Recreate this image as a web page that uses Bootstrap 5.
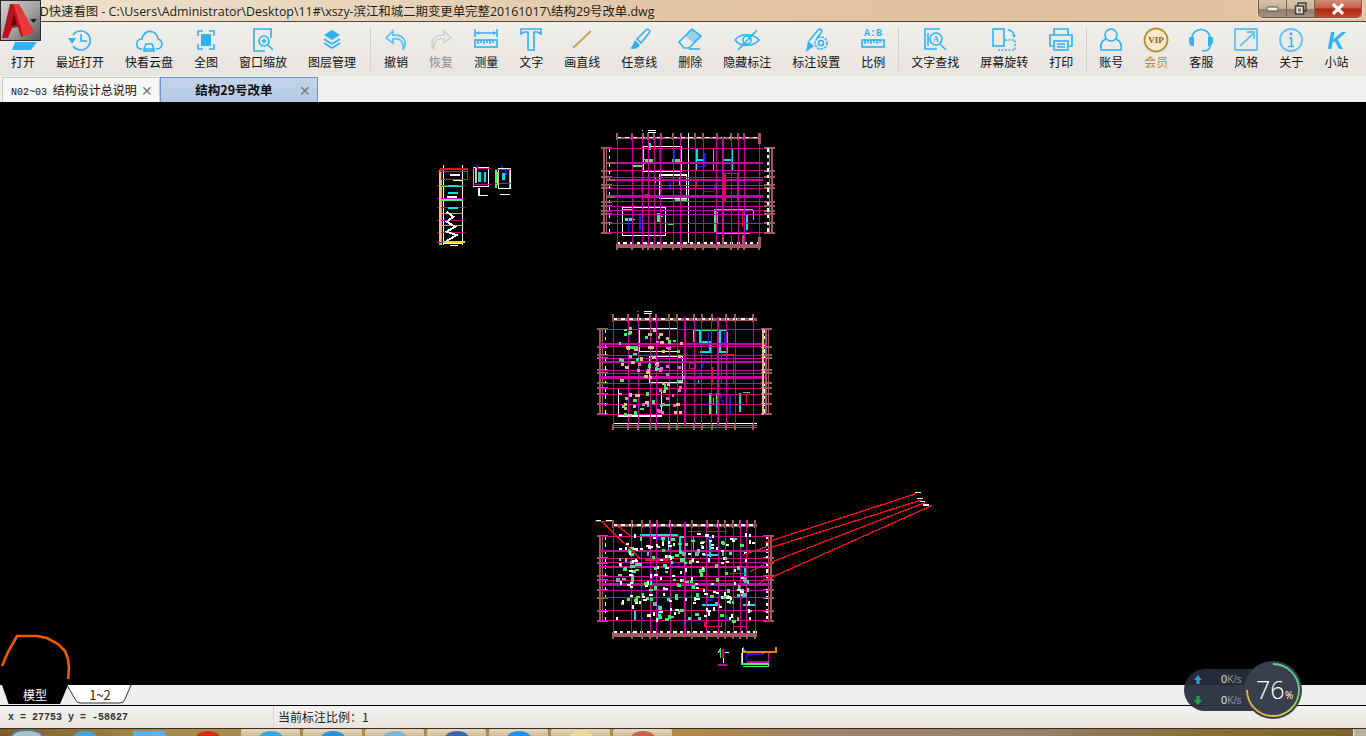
<!DOCTYPE html>
<html lang="zh-CN">
<head>
<meta charset="UTF-8" />
<meta name="viewport" content="width=device-width, initial-scale=1.0" />
<title>CAD快速看图</title>
<link href="https://cdn.jsdelivr.net/npm/bootstrap@5.3.2/dist/css/bootstrap.min.css" rel="stylesheet" />
<style>
  html, body { height: 100%; overflow: hidden; background: #000; }
  body { font-family: "Liberation Sans", "Noto Sans CJK SC", sans-serif; font-size: 12px; color: #111; }
  .app-shell { width: 1366px; height: 736px; position: relative; overflow: hidden; }

  .title-strip { height: 22px; background: linear-gradient(90deg, #efe3d0 0, #e6d0b4 35%, #e2c5a4 50%, #dfbf9e 75%, #e2c4a2 100%); border-bottom: 1px solid #54483e; padding-left: 24px; }
  .title-text { font-family: "Open Sans", "Noto Sans CJK SC", sans-serif; font-size: 12.4px; line-height: 21px; padding-top: 1px; color: #1c1c1c; white-space: nowrap; }
  .win-btns { height: 18px; border: 1px solid #6b5a50; border-top: 0; border-radius: 0 0 5px 5px; overflow: hidden; margin-right: 4px; box-shadow: 0 0 0 1px rgba(255,255,255,.45); }
  .win-btn { width: 28px; background: linear-gradient(#d8c4ad, #c9b199 50%, #927f6e 55%, #a5917f); border-right: 1px solid #75665a; }
  .win-close { width: 46px; border-right: 0; background: linear-gradient(#cf8f7a, #c25a42 48%, #a92812 52%, #c8452a); }

  .tool-strip { height: 54px; background: linear-gradient(#f0efeb, #e8e4e0); padding-left: 11px; }
  .tool-group { gap: 21px; }
  .tool-group + .tool-group { border-left: 1px solid #d2cfca; margin: 5px 0 5px 14px; padding-left: 13px; }
  .tool-group + .tool-group.tool-tight { margin-left: 13px; padding-left: 12px; }
  .tool-item { width: min-content; white-space: nowrap; line-height: 15px; font-size: 12px; font-family: "Noto Sans CJK SC", sans-serif; margin-top: 4px; }
  .tool-group + .tool-group .tool-item { margin-top: -1px; }
  .tool-item svg { display: block; width: 30px; height: 28px; margin: 0 -6px; }
  .tool-off { color: #8d8d8d; }
  .tool-vip { color: #bd8a2e; }
  .ic { fill: none; stroke: #2db2f2; stroke-width: 1.6; }
  .ic-pale { fill: none; stroke: #63c3f3; stroke-width: 1.8; }
  .ifill { fill: #2db2f2; }

  .tab-strip { height: 26px; background: #f0f0f0; padding: 1px 0 0 2px; }
  .doc-tab { width: 158px; height: 25px; padding: 0 6px 0 8px; background: #f7f7f7; border: 1px solid #c9c9c9; border-bottom: 0; font-family: "Noto Sans CJK SC", sans-serif; white-space: nowrap; }
  .doc-tab-on { background: linear-gradient(#c2d4ea, #b5cae4); border: 1px solid #6d92c6; border-bottom: 0; font-weight: 700; font-size: 12.5px; }
  .doc-close { color: #777; font-size: 14px; line-height: 1; font-weight: 400; }
  .mono-part { font-family: "Liberation Mono", monospace; font-size: 10px; margin-right: 3px; }

  .cad-area { height: 583px; background: #000; }
  .cad-area svg { display: block; }

  .sheet-strip { height: 20px; background: #efefef; padding-left: 2px; }
  .sheet-tab { width: 66px; height: 19px; text-align: center; line-height: 19px; font-family: "Noto Sans CJK SC", sans-serif; clip-path: polygon(0 0, 100% 0, 88% 100%, 10% 100%); }
  .sheet-on { background: #000; color: #fff; }
  .sheet-shape { width: 66px; height: 19px; margin-left: -1px; }
  .sheet-label { line-height: 19px; font-size: 13px; color: #3a2410; font-family: "Noto Sans CJK SC", sans-serif; }

  .status-strip { height: 23px; border-top: 1px solid #000; background: linear-gradient(#f3f2f0, #e8e4e0); }
  .status-xy { width: 274px; padding-left: 8px; font-family: "Liberation Mono", monospace; font-size: 10px; font-weight: 700; color: #333; line-height: 23px; border-right: 1px solid #d6d3cf; }
  .status-scale { padding-left: 4px; font-family: "Noto Sans CJK SC", sans-serif; line-height: 22px; color: #222; }

  .task-strip { height: 8px; border-top: 1px solid #3e2e1c; background: linear-gradient(90deg, #7c5c2c 0, #a88a50 12%, #a58a55 40%, #b08a48 50%, #a0806a 60%, #97806a 75%, #8a6c3a 88%, #7d6230 100%); }
  .task-orb { width: 32px; margin-left: 11px; height: 14px; border-radius: 50%; background: #a8c0cf; border: 2px solid #5a7a90; }
  .task-icon { width: 30px; }
  .task-gap-a { margin-left: 27px; }
  .task-gap-b { margin-left: 33px; }
  .task-gap-c { margin-left: 30px; }
  .task-gap-d { margin-left: 18px; }
  .task-btn { width: 59px; margin-right: 3px; background: linear-gradient(#e6d8bf, #d0bb9a); border-radius: 2px 2px 0 0; }
  .task-dot { width: 24px; height: 14px; border-radius: 50%; margin: 2px auto 0; }
  .task-flat { width: 32px; height: 8px; border-radius: 0; background: #5cb2e8; }
  .dot-a { background: #3aa7e0; }
  .dot-b { background: #d82a10; }
  .dot-c { background: #2a8fdc; }
  .dot-d { background: #7ab6d8; }
  .dot-e { background: #3a68a8; }
  .dot-f { background: #1d8ff0; }
  .dot-g { background: #ecd99a; }
  .dot-h { background: #c8604a; }
  .task-corner { width: 13px; background: #b9b19f; border-left: 1px solid #e6dfcf; }

  .app-logo { position: absolute; left: 0; top: 0; width: 41px; height: 41px; background: linear-gradient(135deg, #d0d0d0, #a0a0a0 55%, #565656); border: 1px solid #2b2b2b; }
  .app-logo svg { display: block; }

  .net-widget { position: absolute; left: 1184px; top: 660px; width: 120px; height: 60px; }
  .net-pill { position: absolute; left: 0; top: 9px; width: 90px; height: 42px; border-radius: 21px; background: rgba(40,45,60,.95); color: #8b93a5; font-size: 10px; }
  .net-row { height: 21px; line-height: 21px; padding-left: 10px; }
  .net-row svg { vertical-align: -1px; }
  .net-num { margin-left: 19px; color: #dfe6ee; font-size: 11px; }
  .net-ring { position: absolute; left: 60px; top: 1px; width: 58px; height: 58px; }
</style>
</head>
<body>
<div class="app-shell d-flex flex-column">

  <div class="title-strip d-flex justify-content-between">
    <div class="title-text">CAD快速看图 - C:\Users\Administrator\Desktop\11#\xszy-滨江和城二期变更单完整20161017\结构29号改单.dwg</div>
    <div class="win-btns d-flex">
      <div class="win-btn d-flex align-items-center justify-content-center">
        <svg width="14" height="8"><rect x="1" y="2" width="11" height="4" rx="1" fill="#eee" stroke="#554"/></svg>
      </div>
      <div class="win-btn d-flex align-items-center justify-content-center">
        <svg width="14" height="14"><rect x="4" y="1" width="8" height="8" fill="none" stroke="#443" stroke-width="1.5"/><rect x="1.5" y="4" width="8" height="8" fill="#ddd" stroke="#443" stroke-width="1.5"/><rect x="4" y="6.5" width="3" height="3" fill="#776"/></svg>
      </div>
      <div class="win-btn win-close d-flex align-items-center justify-content-center">
        <svg width="14" height="12"><path d="M2 1 12 11M12 1 2 11" stroke="#fff" stroke-width="3.2"/></svg>
      </div>
    </div>
  </div>

  <div class="tool-strip d-flex">
    <div class="tool-group d-flex">
      <div class="tool-item d-flex flex-column align-items-center"><svg viewBox="0 0 30 28"><path class="ifill" d="M7 16H29L23 24H4Z"/></svg>打开</div>
      <div class="tool-item d-flex flex-column align-items-center"><svg viewBox="0 0 30 28"><path class="ic" stroke-width="2" d="M8 9A9.5 9.5 0 1 1 8 20"/><path class="ifill" d="M3 12H11L7 18Z"/><path class="ic" d="M16 8V15H22"/></svg>最近打开</div>
      <div class="tool-item d-flex flex-column align-items-center"><svg viewBox="0 0 30 28"><path class="ic" d="M8 23C3 23 2 19 3 17C3 14 6 13 8 13C9 7 14 4 19 6C22 7 24 11 24 13C28 14 29 18 27 21C26 23 24 23 22 23"/><path class="ic" d="M10 23 12 18H18L20 23ZM10 23V25H20V23"/></svg>快看云盘</div>
      <div class="tool-item d-flex flex-column align-items-center"><svg viewBox="0 0 30 28"><path class="ic" d="M7 10V5H12M18 5H23V10M23 18V23H18M12 23H7V18"/><rect class="ifill" x="10" y="8" width="10" height="12"/></svg>全图</div>
      <div class="tool-item d-flex flex-column align-items-center"><svg viewBox="0 0 30 28"><path class="ic" d="M20 3H6V25H17"/><path class="ic" d="M20 3H23V12"/><circle class="ic" cx="16" cy="15" r="5"/><path class="ic" d="M20 19 25 24M13.500 15H18.500M16 12.500V17.500"/></svg>窗口缩放</div>
      <div class="tool-item d-flex flex-column align-items-center"><svg viewBox="0 0 30 28"><path class="ifill" d="M15 4 23 9 15 14 7 9Z"/><path class="ic" d="M7 13 15 18 23 13M7 17 15 22 23 17"/></svg>图层管理</div>
    </div>
    <div class="tool-group d-flex">
      <div class="tool-item d-flex flex-column align-items-center"><svg viewBox="0 0 30 28"><path class="ic-pale" d="M12 5 5 12 12 17V13C18 12 23 14 22 24C26 17 25 9 12 9Z"/></svg>撤销</div>
      <div class="tool-item tool-off d-flex flex-column align-items-center"><svg viewBox="0 0 30 28"><path fill="none" stroke="#d0d0d0" stroke-width="1.6" d="M18 5 25 12 18 17V13C12 12 7 14 8 24C4 17 5 9 18 9Z"/></svg>恢复</div>
      <div class="tool-item d-flex flex-column align-items-center"><svg viewBox="0 0 30 28"><path class="ic" d="M4 3V11M26 3V11M5 7H25"/><path class="ifill" d="M5 7 8 5V9ZM25 7 22 5V9Z"/><rect class="ic" x="4" y="14" width="22" height="7"/><path class="ic" d="M7 14V18M10 14V17M13 14V18M16 14V17M19 14V18M22 14V17"/></svg>测量</div>
      <div class="tool-item d-flex flex-column align-items-center"><svg viewBox="0 0 30 28"><path class="ic" d="M5 8V3H25V8L22 6H18V24H12V6H8Z"/></svg>文字</div>
      <div class="tool-item d-flex flex-column align-items-center"><svg viewBox="0 0 30 28"><path fill="none" stroke="#c3a25b" stroke-width="2" d="M6 22 24 5"/></svg>画直线</div>
      <div class="tool-item d-flex flex-column align-items-center"><svg viewBox="0 0 30 28"><path class="ic" d="M13 13 22 4C24 2 27 5 25 7L17 17Z"/><path class="ifill" d="M11 14 16 19C14 23 9 24 6 22C9 21 9 17 11 14Z"/></svg>任意线</div>
      <div class="tool-item d-flex flex-column align-items-center"><svg viewBox="0 0 30 28"><path class="ic" d="M4 16 17 3 26 10 14 22H9Z"/><path class="ifill" opacity=".45" d="M10 10 17 3 26 10 19 17Z"/><path class="ic" d="M14 23H25"/></svg>删除</div>
      <div class="tool-item d-flex flex-column align-items-center"><svg viewBox="0 0 30 28"><path class="ic" d="M3 14C8 7 21 7 27 14C21 21 8 21 3 14Z"/><circle class="ic" cx="15" cy="14" r="4"/><path class="ic" d="M25 4 6 24"/></svg>隐藏标注</div>
      <div class="tool-item d-flex flex-column align-items-center"><svg viewBox="0 0 30 28"><path class="ic" d="M8 15 17 4C19 2 22 4 20 7L16 12"/><path class="ifill" d="M7 15 13 20 5 26Z"/><circle class="ic" stroke-dasharray="2.500 1" cx="20" cy="17" r="6"/><circle class="ic" cx="20" cy="17" r="2.500"/></svg>标注设置</div>
      <div class="tool-item d-flex flex-column align-items-center"><svg viewBox="0 0 30 28"><text x="15" y="10" text-anchor="middle" class="ifill" font-family="Liberation Mono" font-weight="700" font-size="10">A:B</text><rect class="ic" x="4" y="14" width="22" height="7"/><path class="ic" d="M7 14V18M10 14V17M13 14V18M16 14V17M19 14V18M22 14V17"/></svg>比例</div>
    </div>
    <div class="tool-group tool-tight d-flex">
      <div class="tool-item d-flex flex-column align-items-center"><svg viewBox="0 0 30 28"><path class="ic" d="M20 3H5V23H17"/><path class="ic" d="M8 7V20"/><circle class="ic" cx="16" cy="13" r="6"/><text x="16" y="16" text-anchor="middle" class="ifill" font-size="8" font-weight="700" font-family="Liberation Serif">A</text><path class="ic" d="M20 18 26 24"/></svg>文字查找</div>
      <div class="tool-item d-flex flex-column align-items-center"><svg viewBox="0 0 30 28"><rect class="ic" x="4" y="3" width="11" height="17"/><path class="ic" stroke-dasharray="2 1.500" d="M9 24H26V14H15"/><path class="ic" d="M19 4C22 4 24 6 25 9"/><path class="ifill" d="M23 9H27L25 12Z"/></svg>屏幕旋转</div>
      <div class="tool-item d-flex flex-column align-items-center"><svg viewBox="0 0 30 28"><path class="ic" d="M8 9V3H22V9"/><path class="ic" d="M8 20H4V9H26V20H22"/><rect class="ic" x="8" y="15" width="14" height="9"/><path class="ic" d="M11 18H19M11 21H19"/></svg>打印</div>
    </div>
    <div class="tool-group tool-tight d-flex">
      <div class="tool-item d-flex flex-column align-items-center"><svg viewBox="0 0 30 28"><circle class="ic" cx="15" cy="9" r="6"/><path class="ic" d="M10 13C5 15 4 19 5 24H25C26 19 25 15 20 13"/></svg>账号</div>
      <div class="tool-item tool-vip d-flex flex-column align-items-center"><svg viewBox="0 0 30 28"><circle cx="15" cy="14" r="11.500" fill="#f6e9c8" stroke="#b58a3c" stroke-width="1.800"/><text x="15" y="17" text-anchor="middle" font-family="Liberation Serif" font-weight="700" font-size="9" fill="#8a5a14">VIP</text></svg>会员</div>
      <div class="tool-item d-flex flex-column align-items-center"><svg viewBox="0 0 30 28"><path class="ic" d="M6 14C5 0 25 0 24 14"/><path class="ifill" d="M4 11H8V20H6C3 20 2 12 4 11ZM22 11H26C28 12 27 20 24 20H22Z"/><path class="ic" d="M24 20C24 23 21 25 16 25"/></svg>客服</div>
      <div class="tool-item d-flex flex-column align-items-center"><svg viewBox="0 0 30 28"><path class="ic-pale" d="M14 3H26V24H4V9"/><path class="ic-pale" d="M4 9V3H14M9 20 23 7M16 6H23V13"/></svg>风格</div>
      <div class="tool-item d-flex flex-column align-items-center"><svg viewBox="0 0 30 28"><circle class="ic-pale" cx="15" cy="14" r="11"/><circle class="ifill" cx="15" cy="8" r="1.400"/><path class="ic" d="M13 12H15.500V20M12 20.500H18"/></svg>关于</div>
      <div class="tool-item d-flex flex-column align-items-center"><svg viewBox="0 0 30 28"><text x="15" y="23" text-anchor="middle" class="ifill" font-family="Liberation Sans" font-style="italic" font-weight="700" font-size="24">K</text></svg>小站</div>
    </div>
  </div>

  <div class="tab-strip d-flex">
    <div class="doc-tab d-flex align-items-center justify-content-between"><span><span class="mono-part">N02~03</span> 结构设计总说明</span><span class="doc-close">✕</span></div>
    <div class="doc-tab doc-tab-on d-flex align-items-center justify-content-between"><span class="flex-grow-1 text-center">结构29号改单</span><span class="doc-close">✕</span></div>
  </div>

  <div class="cad-area">
    <svg id="cad" width="1366" height="583" viewBox="0 102 1366 583" shape-rendering="crispEdges">
      <path d="M2 666 8 652 17 636H37L47 638 58 644 65 651 68 659 69 668 68 679" fill="none" stroke="#f05a00" stroke-width="2.600" shape-rendering="auto"/>
    </svg>
  </div>

  <div class="sheet-strip d-flex">
    <div class="sheet-tab sheet-on">模型</div>
    <div class="sheet-shape position-relative">
      <svg width="66" height="19" class="position-absolute top-0 start-0"><path d="M0 0 8 14Q10 18 13 18H53Q57 18 58 14L64 0" fill="#fff" stroke="#333"/></svg>
      <div class="sheet-label position-relative text-center">1~2</div>
    </div>
  </div>

  <div class="status-strip d-flex">
    <div class="status-xy">x = 27753 y = -58627</div>
    <div class="status-scale">当前标注比例：1</div>
  </div>

  <div class="task-strip d-flex overflow-hidden">
    <div class="task-orb"></div>
    <div class="task-icon task-gap-a"><div class="task-dot dot-a"></div></div>
    <div class="task-icon task-gap-b"><div class="task-dot task-flat"></div></div>
    <div class="task-icon task-gap-c"><div class="task-dot dot-b"></div></div>
    <div class="task-btn task-gap-d"><div class="task-dot dot-a"></div></div>
    <div class="task-btn"><div class="task-dot dot-c"></div></div>
    <div class="task-btn"><div class="task-dot dot-d"></div></div>
    <div class="task-btn"><div class="task-dot dot-e"></div></div>
    <div class="task-btn"><div class="task-dot dot-f"></div></div>
    <div class="task-btn"><div class="task-dot dot-g"></div></div>
    <div class="task-btn"><div class="task-dot dot-h"></div></div>
    <div class="flex-grow-1"></div>
    <div class="task-corner"></div>
  </div>

  <!-- logo sits over the title bar and the first toolbar button -->
  <div class="app-logo">
    <svg width="39" height="39" viewBox="0 0 39 39">
      <path d="M9 3 1 37H7L11 27 17 26 20 36 33 31 18 3Z" fill="#b8121a"/>
      <path d="M12 3H18L33 31 22 35 14 8Z" fill="#e8383c"/>
      <path d="M13 13 16 24 10 25Z" fill="#5a0a10"/>
      <path d="M29 18H36L32.500 22Z" fill="#222"/>
    </svg>
  </div>

  <div class="net-widget">
    <div class="net-pill">
      <div class="net-row"><svg width="8" height="9"><path d="M4 0 8 5H5.500V9H2.500V5H0Z" fill="#2a9fe0"/></svg><span class="net-num">0</span>K/s</div>
      <div class="net-row"><svg width="8" height="9"><path d="M4 9 8 4H5.500V0H2.500V4H0Z" fill="#1fa83c"/></svg><span class="net-num">0</span>K/s</div>
    </div>
    <svg class="net-ring" viewBox="0 0 58 58">
      <defs>
        <linearGradient id="ringGrad" x1="1" y1="0" x2="0" y2="1">
          <stop offset="0" stop-color="#2fc3a8"/><stop offset=".55" stop-color="#c8dc4a"/><stop offset="1" stop-color="#f0a040"/>
        </linearGradient>
      </defs>
      <circle cx="29" cy="29" r="29" fill="#3a3f4e"/>
      <path d="M29 3A26 26 0 1 1 3 29" fill="none" stroke="url(#ringGrad)" stroke-width="1.800"/>
      <text x="12" y="38" fill="#fff" font-family="Open Sans" font-weight="300" font-size="25">76</text>
      <text x="41" y="38" fill="#fff" font-family="Open Sans" font-size="10">%</text>
    </svg>
  </div>
</div>

<script src="https://cdn.jsdelivr.net/npm/bootstrap@5.3.2/dist/js/bootstrap.bundle.min.js"></script>
<script>
  // the drawings: coordinates are the 3x crop coordinates, scaled down per group
  const MAG = "#cc00a0", BRN = "#a05c5c", WHT = "#ffffff", GRN = "#44ee66", CYA = "#00e0e8", BLU = "#1a1ae8", RED = "#ee1010", PEA = "#f5b878", PNK = "#f060d0";
  const cad = document.getElementById("cad");
  let seed = 7;
  const rnd = (n) => { seed = (seed * 9301 + 49297) % 233280; return seed / 233280 * n; };

  const hLines = (ys, x1, x2) => ys.map((y) => `M${x1} ${y}H${x2}`).join("");
  const vLines = (xs, y1, y2) => xs.map((x) => `M${x} ${y1}V${y2}`).join("");
  const scatter = (n, x1, y1, x2, y2, len) => {
    let d = "";
    for (let i = 0; i < n; i++) {
      const x = Math.round(x1 + rnd(x2 - x1)), y = Math.round(y1 + rnd(y2 - y1));
      d += i % 2 ? `M${x} ${y}h${len}` : `M${x} ${y}v${len}`;
    }
    return d;
  };
  const dashes = (axis, at, from, to, step) => {
    let d = "";
    for (let p = from; p < to; p += step) d += axis === "h" ? `M${p} ${at}h${step / 2}` : `M${at} ${p}v${step / 2}`;
    return d;
  };

  function addGroup(ox, oy, scale, parts) {
    const g = document.createElementNS("http://www.w3.org/2000/svg", "g");
    g.setAttribute("transform", `translate(${ox} ${oy}) scale(${scale})`);
    parts.forEach(([color, width, d]) => {
      const p = document.createElementNS("http://www.w3.org/2000/svg", "path");
      p.setAttribute("d", d);
      p.setAttribute("fill", "none");
      p.setAttribute("stroke", color);
      p.setAttribute("stroke-width", width);
      g.appendChild(p);
    });
    cad.appendChild(g);
  }

  function frame(x1, x2, y1, y2, left, right, xs, ys) {
    const top = ys[0], bottom = ys[ys.length - 1];
    return [
      [BRN, 4, hLines([y1, y1 + 4, y2, y2 + 6], x1, x2) + vLines([left - 8, left, right, right + 8], top, bottom)],
      [BRN, 6, vLines(xs, y1 - 14, y1 + 8) + vLines(xs, y2 - 6, y2 + 14) + hLines(ys, left - 18, left + 16) + hLines(ys, right - 16, right + 18)],
      [WHT, 4, dashes("h", y1, x1, x2, 24) + dashes("h", y2 - 6, x1, x2, 20) + dashes("v", left + 8, top, bottom, 22) + dashes("v", right - 4, top, bottom, 20)],
    ];
  }

  // top plan
  const p1h = [85, 152, 172, 195, 205, 245, 258, 272, 282, 310, 338];
  const p1v = [82, 127, 158, 175, 193, 212, 250, 272, 315, 340, 380, 423, 445, 462, 508];
  addGroup(590, 120, 1 / 3, [
    ...frame(80, 512, 52, 375, 50, 538, p1v, p1h),
    [WHT, 4, "M160 80H275V155H160ZM97 262H227V347H97ZM210 165H290V235H210ZM295 40V370"],
    [GRN, 4, "M320 85H428M372 270H490M375 270V340M180 70V90M160 118H190M135 138H155M245 120H275M100 268H130M105 298H135M205 290H220M235 312H250M255 240H290M165 180H180M320 85V150M490 270V300"],
    [GRN, 8, "M180 70V78M130 138H155M165 125H190M245 122H270M105 298H130M205 280V305M270 175V195"],
    [CYA, 5, "M320 85V120H340M370 88V150M400 120H425M425 85V150M378 340H480M382 275V310H395M470 285V330M195 170V190M245 180H270"],
    [BLU, 4, "M175 90V140M210 90V125M252 90V125M345 100V140H320M385 170 370 215H340M155 170V215M250 205H275V225M115 290V335M150 280V330M195 300V335M425 280V335M240 190 V210"],
    [RED, 4, "M405 160H443V245H405ZM318 180V200M250 90V110M165 225H180M380 195V250M458 270V320"],
    [MAG, 3, hLines(p1h, 50, 520) + vLines(p1v, 50, 375)],
    [MAG, 6, hLines([128, 180], 50, 520) + vLines([398], 50, 375)],
    [MAG, 9, hLines([230], 50, 520)],
    [BRN, 7, "M508 40V72M508 350V375M398 350V372M458 345V372M50 128H75M50 180H75M50 230H75"],
    [WHT, 3, "M155 30h4M175 30h24M175 36h24"],
  ]);

  // middle plan
  const p2h = [73, 125, 150, 160, 195, 205, 235, 250, 268, 298, 328];
  const p2v = [70, 115, 145, 180, 198, 237, 262, 312, 335, 365, 408, 435, 490];
  addGroup(590, 305, 1 / 3, [
    ...frame(70, 500, 42, 362, 38, 528, p2v, p2h),
    [WHT, 4, "M148 70H262V140H148ZM85 250H215V333H85ZM180 155H278V232H180ZM70 355H500"],
    [GRN, 4, "M310 75H410M310 75V110M360 265V330M380 265V330M460 262H480"],
    [CYA, 5, "M330 75V110H360V140H330M390 75V140H412V80M370 280V300M325 225V235H350M450 265V320"],
    [BLU, 4, "M355 80V130M405 80V120M345 160 325 220M300 205H330M410 170V225M420 270V330M390 265 400 300"],
    [RED, 4, "M395 150H430V235H395ZM298 175H315V190H298ZM368 185V240M470 260V300"],
    [MAG, 3, hLines(p2h, 30, 525) + vLines(p2v, 35, 362)],
    [MAG, 6, hLines([118, 170], 30, 525) + vLines([285, 385], 35, 362)],
    [MAG, 9, hLines([218], 30, 525)],
    [PEA, 10, scatter(44, 88, 65, 278, 330, 9)],
    [GRN, 8, scatter(34, 85, 70, 280, 330, 10) + "M120 128H145M260 228H280M222 300H240"],
    [PNK, 9, scatter(22, 140, 90, 280, 320, 8)],
    [PEA, 5, "M518 72V330"],
    [RED, 4, "M142 20h6"],
    [WHT, 3, "M162 20h24M162 26h24"],
  ]);

  // bottom plan with the stray leader lines
  const p3h = [138, 205, 218, 258, 270, 300, 323, 362, 392];
  const p3v = [70, 125, 155, 180, 200, 240, 305, 350, 385, 405, 430, 450, 470, 495];
  addGroup(590, 490, 1 / 3, [
    ...frame(70, 500, 105, 432, 38, 535, p3v, p3h),
    [CYA, 4, "M150 135H265M235 140V180M310 140V180M360 140V200M270 140V180M135 360V390M155 320V370M205 345V390M335 345H390M460 345H495M340 195H385M465 235V280"],
    [BLU, 6, "M200 148h14M355 148h10M185 250V280M350 310V330H370M155 380V390M410 375V390M180 300H210"],
    [RED, 4, "M345 395V410H395V395M430 395V410H470V395M295 125h40M355 125h50M165 210H240M420 250H470M310 295H340"],
    [MAG, 3, hLines(p3h, 30, 540) + vLines(p3v, 95, 432)],
    [MAG, 6, hLines([183, 232], 30, 540) + vLines([285], 95, 432)],
    [MAG, 9, hLines([283], 30, 540)],
    [GRN, 8, scatter(110, 85, 140, 490, 395, 11)],
    [WHT, 6, scatter(130, 80, 130, 490, 385, 10)],
    ["#7fa8c0", 12, "M78 270h12M170 193h8M275 193h14M315 193h12M395 193h6M460 270h10M190 342h10M375 342h10M455 315h16"],
    [RED, 4, "M525 158 975 12M535 175 995 30M530 222 1005 38M545 262 1025 47M15 94H70M35 95 150 205M85 110 125 140M460 195 530 170M480 245 520 225M505 280 545 260"],
    [WHT, 4, "M975 8h18M982 26h16M990 35h16M1000 45h16M18 92h14M48 92h18"],
    [WHT, 4, "M400 478V520M458 475V525M405 488h12"],
    [GRN, 4, "M392 475V505M385 490 392 475M455 490V522H535V530H460M455 490 465 480"],
    [MAG, 5, "M398 478V505M470 516H535V490M385 524H410"],
    [BLU, 4, "M470 492H520M470 492V512"],
    ["#f08000", 4, "M460 470V486H558V472M520 488V492"],
  ]);

  // stair section and two small details
  addGroup(430, 155, 1 / 3, [
    [WHT, 4, "M40 30V270M98 30V270M40 265H98M60 272H85M130 38H175V95H130ZM147 100V120M143 122H175M205 40H240V100H205ZM210 118H240"],
    [GRN, 4, "M30 45V270M33 45V270M35 95H98M35 135H98M35 175H98M35 212H98M130 35V92M198 42V100M238 38V100"],
    [MAG, 3, "M22 48H110M22 90H105M22 130H105M22 158H105M22 195H105M22 232H105M22 262H105M128 40H182M128 88H182M196 42H242M196 85H242"],
    [WHT, 6, "M50 170 70 185 50 200 75 215 50 230 80 240 50 258M70 75H95M50 125H80M60 60H90"],
    ["#ffd800", 6, "M40 260H105"],
    [CYA, 7, "M55 92H85M55 113H85M55 158H85M148 50V80M165 50V80M220 55V75"],
    [BLU, 5, "M140 30V45M212 36h8M228 42V60"],
    [RED, 4, "M33 42H112V73H33Z"],
    [PEA, 4, "M138 40V85M204 50V90M30 50V262"],
  ]);
</script>
</body>
</html>
